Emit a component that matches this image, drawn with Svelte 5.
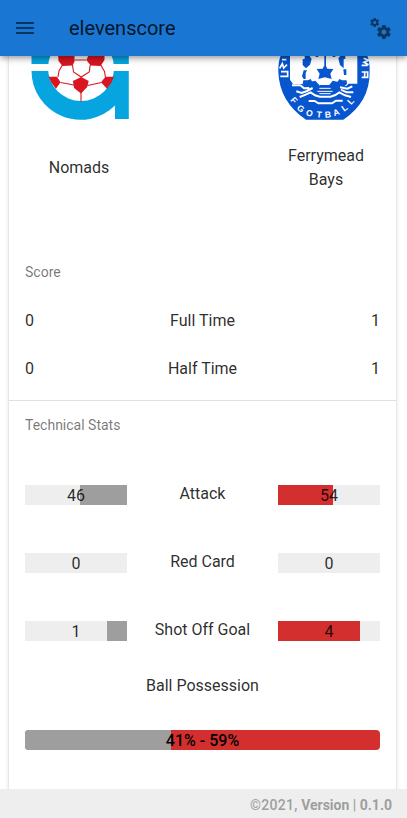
<script>
  const scores = [
    { label: 'Full Time', home: 0, away: 1 },
    { label: 'Half Time', home: 0, away: 1 },
  ];
  const stats = [
    { label: 'Attack', home: 46, away: 54 },
    { label: 'Red Card', home: 0, away: 0 },
    { label: 'Shot Off Goal', home: 1, away: 4 },
  ];
  const share = (a, b) => (a + b ? (a / (a + b)) * 100 : 0);
  const possession = { home: 41, away: 59 };
</script>

<div class="app">
  <header>
    <svg class="icon" viewBox="0 0 24 24"><path d="M3 6h18v2H3zm0 5h18v2H3zm0 5h18v2H3z" /></svg>
    <h1>elevenscore</h1>
    <svg class="icon" viewBox="0 0 24 24"><path d="M15.9,18.45C17.25,18.45 18.35,17.35 18.35,16C18.35,14.65 17.25,13.55 15.9,13.55C14.54,13.55 13.45,14.65 13.45,16C13.45,17.35 14.54,18.45 15.9,18.45M21.1,16.68L22.58,17.84C22.71,17.95 22.75,18.13 22.66,18.29L21.26,20.71C21.17,20.86 21,20.92 20.83,20.86L19.09,20.16C18.73,20.44 18.33,20.67 17.91,20.85L17.64,22.7C17.62,22.87 17.47,23 17.3,23H14.5C14.32,23 14.18,22.87 14.15,22.7L13.89,20.85C13.46,20.67 13.07,20.44 12.71,20.16L10.96,20.86C10.81,20.92 10.62,20.86 10.54,20.71L9.14,18.29C9.05,18.13 9.09,17.95 9.22,17.84L10.7,16.68L10.65,16L10.7,15.31L9.22,14.16C9.09,14.05 9.05,13.86 9.14,13.71L10.54,11.29C10.62,11.13 10.81,11.07 10.96,11.13L12.71,11.84C13.07,11.56 13.46,11.32 13.89,11.15L14.15,9.29C14.18,9.13 14.32,9 14.5,9H17.3C17.47,9 17.62,9.13 17.64,9.29L17.91,11.15C18.33,11.32 18.73,11.56 19.09,11.84L20.83,11.13C21,11.07 21.17,11.13 21.26,11.29L22.66,13.71C22.75,13.86 22.71,14.05 22.58,14.16L21.1,15.31L21.15,16L21.1,16.68M6.69,8.07C7.56,8.07 8.26,7.37 8.26,6.5C8.26,5.63 7.56,4.92 6.69,4.92A1.58,1.58 0 0,0 5.11,6.5C5.11,7.37 5.82,8.07 6.69,8.07M10.03,6.94L11,7.68C11.07,7.75 11.09,7.87 11.03,7.97L10.13,9.53C10.08,9.63 9.96,9.67 9.86,9.63L8.74,9.18L8,9.62L7.81,10.81C7.79,10.92 7.7,11 7.59,11H5.79C5.67,11 5.58,10.92 5.56,10.81L5.4,9.62L4.64,9.18L3.52,9.63C3.41,9.67 3.3,9.63 3.24,9.53L2.34,7.97C2.28,7.87 2.31,7.75 2.39,7.68L3.34,6.94L3.31,6.5L3.34,6.06L2.39,5.32C2.31,5.25 2.28,5.13 2.34,5.03L3.24,3.47C3.3,3.37 3.41,3.33 3.52,3.37L4.63,3.82L5.4,3.38L5.56,2.19C5.58,2.08 5.67,2 5.79,2H7.59C7.7,2 7.79,2.08 7.81,2.19L8,3.38L8.74,3.82L9.86,3.37C9.96,3.33 10.08,3.37 10.13,3.47L11.03,5.03C11.09,5.13 11.07,5.25 11,5.32L10.03,6.06L10.06,6.5L10.03,6.94Z" /></svg>
  </header>

  <main>
    <section class="card">
      <div class="teams">
        <div class="team">
          <svg class="logo" width="98" height="96" viewBox="31.5 24 98 96">
            <path fill="#07a5e0" d="M32 24h97.3v40H32zM32 71h97.3v48h-13.8v-13.4A49 49 0 0 1 32 71z" />
            <circle cx="81.5" cy="68" r="33" fill="#fff" />
            <g fill="#d9151f">
              <path d="M58 48h17v13.500l-2 4-10 .5-4-5zM87 60l2-5V48h16v12l-4 6-10-.5zM81.700 77l7.500 4-1.500 6-6.200 6.500-6.900-5.500-1.200-7z" />
              <path d="M49 76.700h8.500l3.500 5.500-4.500 6.500A34 34 0 0 1 49 76.700zM114.500 76.700h-8.500l-4.500 5.500 6 6.500a34 34 0 0 0 7-12z" />
            </g>
            <path fill="none" stroke="#d9151f" stroke-width="1.100" d="M75 60h12M63.500 64l-4 7-1 6M101 64.500l4 7 1 6M73 65l1 7 7.700 5 8-5 1-7M61 82.500l13.500 2.500M102 82.500l-14 3M81.500 92v9.500" />
            <path fill="#fff" d="M30 64h19v7H30zM114.500 64H131v7h-16.500z" />
          </svg>
          <p>Nomads</p>
        </div>
        <div class="team">
          <svg class="logo" width="98" height="96" viewBox="277 24 98 96">
            <g transform="translate(270 50) scale(.3333)">
              <path fill="#0755cf" d="M25 65Q23 5 62-20H262Q301 5 299 65 300 155 220 209H108Q28 155 25 65z" />
              <path fill="#fff" d="M60-20H262V101H236l-8 8-12-3-10-10-18-4-12 15h-26L136 92l-18 4-8 12-12-6H69l-9-13z" />
              <g fill="#0755cf">
                <path d="m165 42 7 14 18 1-9 14 4 16-20-5-20 5 4-16-9-14 18-1zM163 15h5v35h-5zM104 15h13l8 12-5 17-12 11-10-10V27h6zM226 15h-13l-8 10 5 20 11 10V27h5zM101 61h10l-4 8v18h-6l-5-8zM220 58h9v17h-7zM137 15h8v6h-8zM188 15h8v6h-8zM100 91h14l8-4 8 15 10 5v9h-12l-8-8h-14l-8-6zM230 91h-14l-8-4-9 15-9 5v9h12l8-8h14l7-6zM150 105h30v4h-30z" />
              </g>
              <g fill="none" stroke="#fff" stroke-width="6">
                <path d="M66 106h25l11 9 16-1M79 124l16 5 16-6 17-9M89 141l18-7 15-7 13 9 14 4h33l14-5 12-8 17 9 18 5M210 112l22 4 15-7M213 119l17 8h20M116 153h18l11 7h41l12-8h20" />
                <path stroke-width="3" d="M148 115h34M142 124h46M148 131h34" />
              </g>
              <g fill="none" stroke="#fff" stroke-width="5">
                <path d="M29 55l8-14 4 13 10-10M36 29h13M33 65h20v14H31M281 25l15 6-14 6 14 7M275 46h18M275 66h18v16h-18M284 66v16" />
              </g>
              <g fill="#fff" font-family="Liberation Sans, Arial, sans-serif" font-weight="bold" font-size="26">
                <text transform="translate(60 151) rotate(49)">F</text>
                <text transform="translate(79 177) rotate(36)">G</text>
                <text transform="translate(106 194) rotate(20)">O</text>
                <text transform="translate(139 202) rotate(6)">T</text>
                <text transform="translate(165 203) rotate(-4)">B</text>
                <text transform="translate(193 199) rotate(-20)">A</text>
                <text transform="translate(222 185) rotate(-35)">L</text>
                <text transform="translate(243 166) rotate(-47)">L</text>
              </g>
            </g>
          </svg>
          <p>Ferrymead Bays</p>
        </div>
      </div>

      <h2>Score</h2>
      {#each scores as row}
        <div class="score"><span>{row.home}</span><span>{row.label}</span><span>{row.away}</span></div>
      {/each}
      <hr />

      <h2>Technical Stats</h2>
      <div class="stats">
        {#each stats as s}
          <div class="stat">
            <div class="bar home">
              <i style="width:{share(s.home, s.away)}%"></i><span>{s.home}</span>
            </div>
            <div class="label">{s.label}</div>
            <div class="bar away">
              <i style="width:{share(s.away, s.home)}%"></i><span>{s.away}</span>
            </div>
          </div>
        {/each}
      </div>
      <div class="possession-label">Ball Possession</div>
      <div class="bar possession">
        <i style="width:{possession.home}%"></i>
        <span>{possession.home}% - {possession.away}%</span>
      </div>
    </section>
  </main>

  <footer><span><span class="year">©2021,</span> <b>Version</b> | <b>0.1.0</b></span></footer>
</div>

<style>
  :global(body) { margin: 0; background: #fff; }
  .app {
    height: 818px; display: flex; flex-direction: column; overflow: hidden;
    font: 400 16px/24px Roboto, sans-serif; color: rgba(0, 0, 0, .84);
  }
  header {
    box-sizing: border-box; height: 56px; flex: none; padding: 0 15px 0 13px;
    display: flex; align-items: center; background: #1976d2; z-index: 1;
    box-shadow: 0 2px 4px -1px rgba(0,0,0,.2), 0 4px 5px rgba(0,0,0,.14), 0 1px 10px rgba(0,0,0,.12);
  }
  .icon { width: 24px; height: 24px; fill: rgba(0, 0, 0, .54); }
  h1 { flex: 1; margin: 0 0 0 32px; font-size: 20px; line-height: 28px; font-weight: 400; }
  main { flex: 1; min-height: 0; padding: 0 11px 0 9px; }
  .card {
    box-sizing: border-box; height: 780px; margin-top: -32px; background: #fff;
    box-shadow: 0 3px 1px -2px rgba(0,0,0,.2), 0 2px 2px rgba(0,0,0,.14), 0 1px 5px rgba(0,0,0,.12);
  }
  .teams { display: flex; justify-content: space-between; height: 224px; padding: 0 16px; }
  .team { width: 108px; display: flex; flex-direction: column; align-items: center; text-align: center; }
  .logo { display: block; flex: none; }
  .team:first-child .logo { margin-left: 2px; }
  .team p { margin: 24px 0 0; height: 48px; display: flex; align-items: center; }
  h2 { margin: 0; padding: 0 16px; font-size: 14px; line-height: 48px; font-weight: 400; color: rgba(0, 0, 0, .54); }
  .score { box-sizing: border-box; height: 48px; padding: 2px 16px 0; display: grid; grid-template-columns: 1fr 2fr 1fr; align-items: center; text-align: center; }
  .score span:first-child { text-align: left; }
  .score span:last-child { text-align: right; }
  hr { margin: 8px 0 0; border: 0; height: 1px; background: rgba(0, 0, 0, .12); }
  .stats { padding: 12px 16px 0; }
  .stat { height: 68px; display: flex; justify-content: space-between; }
  .label { margin-top: 21px; }
  .bar { position: relative; display: flex; width: 102px; height: 20px; background: #eee; }
  .stat .bar { margin-top: 24px; }
  .bar i { background: #9e9e9e; }
  .bar.home { justify-content: flex-end; }
  .bar.away i { background: #d32f2f; }
  .bar span { position: absolute; inset: 0; line-height: 21px; text-align: center; }
  .possession-label { margin-top: 9px; text-align: center; }
  .bar.possession {
    width: auto; margin: 32px 16px 0; background: #d32f2f; border-radius: 4px;
    overflow: hidden; font-weight: 500; color: #000;
  }
  footer {
    box-sizing: border-box; height: 29px; flex: none; padding: 3px 15px 0; z-index: 1;
    display: flex; align-items: center; justify-content: flex-end; background: #eee;
    font-size: 14px; line-height: 20px; font-weight: 500; color: #9e9e9e;
  }
  .year { letter-spacing: .3px; }
  footer b { font-weight: 700; }
</style>
